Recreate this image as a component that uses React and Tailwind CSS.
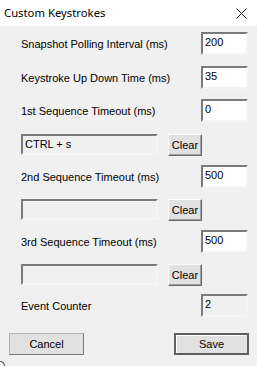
import React from 'react';

const FONT = { fontFamily: '"Liberation Sans", Arial, sans-serif' };

const Field = ({ value, readOnly, className = '' }) => (
  <div
    className={`h-[23px] w-[47px] border-2 border-t-[#7a7a7a] border-l-[#7a7a7a] border-r-[#f4f4f4] border-b-[#f4f4f4] pl-[2px] pt-[1px] text-[11px] leading-[14px] text-black ${
      readOnly ? 'bg-[#f0f0f0]' : 'bg-white'
    } ${className}`}
  >
    {value}
  </div>
);

const Row = ({ label, value, readOnly, className = '' }) => (
  <div className={`flex items-center justify-between pl-[21px] pr-[9px] ${className}`}>
    <span className="text-[11px] leading-[14px] text-black">{label}</span>
    <Field value={value} readOnly={readOnly} />
  </div>
);

const ClearRow = ({ text, className = '' }) => (
  <div className={`flex items-start pl-[21px] ${className}`}>
    <div className="h-[21px] w-[137px] border-2 border-t-[#7a7a7a] border-l-[#7a7a7a] border-r-[#f4f4f4] border-b-[#f4f4f4] bg-[#f0f0f0] pl-[2px] pt-[1px] text-[11px] leading-[14px] text-black">
      {text}
    </div>
    <button className="ml-[10px] h-[22px] w-[34px] border border-t-[#fdfdfd] border-l-[#fdfdfd] border-r-[#6a6a6a] border-b-[#6a6a6a] bg-[#e1e1e1] text-[11px] leading-[14px] text-black shadow-[inset_-1px_-1px_0_#a0a0a0]">
      Clear
    </button>
  </div>
);

export default function App() {
  return (
    <div className="relative h-[366px] w-[257px] overflow-hidden bg-[#f0f0f0]" style={FONT}>
      {/* Title bar */}
      <div className="flex h-[26px] items-center justify-between bg-white pl-[4px] pr-[9px]">
        <span
          className="text-[11.3px] leading-[16px] text-black"
          style={{ fontFamily: '"Noto Sans", "Open Sans", sans-serif' }}
        >
          Custom Keystrokes
        </span>
        <svg width="11" height="11" viewBox="0 0 11 11" className="mr-[1px]">
          <path d="M0.5 0.5 L10.5 10.5 M10.5 0.5 L0.5 10.5" stroke="#1a1a1a" strokeWidth="1" fill="none" />
        </svg>
      </div>

      <Row label="Snapshot Polling Interval (ms)" value="200" className="mt-[6px]" />
      <Row label="Keystroke Up Down Time (ms)" value="35" className="mt-[11px]" />
      <Row label="1st Sequence Timeout (ms)" value="0" className="mt-[10px]" />
      <ClearRow text="CTRL + s" className="mt-[12px]" />
      <Row label="2nd Sequence Timeout (ms)" value="500" className="mt-[9px]" />
      <ClearRow text="" className="mt-[11px]" />
      <Row label="3rd Sequence Timeout (ms)" value="500" className="mt-[9px]" />
      <ClearRow text="" className="mt-[11px]" />
      <Row label="Event Counter" value="2" readOnly className="mt-[8px]" />

      {/* Footer buttons */}
      <div className="mt-[16px] flex justify-between pl-[9px] pr-[8px]">
        <button className="h-[22px] w-[75px] border border-t-[#b4b4b4] border-l-[#b4b4b4] border-r-[#7a7a7a] border-b-[#7a7a7a] bg-[#e1e1e1] text-[11px] leading-[14px] text-black">
          Cancel
        </button>
        <button className="h-[22px] w-[75px] border-2 border-[#5f5f5f] bg-[#e1e1e1] text-[11px] leading-[14px] text-black shadow-[inset_1px_1px_0_#ffffff]">
          Save
        </button>
      </div>

      {/* window corner artefact */}
      <div className="absolute bottom-[-4px] left-[-4px] h-[9px] w-[9px] rounded-full border border-[#3a3a3a]" />
    </div>
  );
}
